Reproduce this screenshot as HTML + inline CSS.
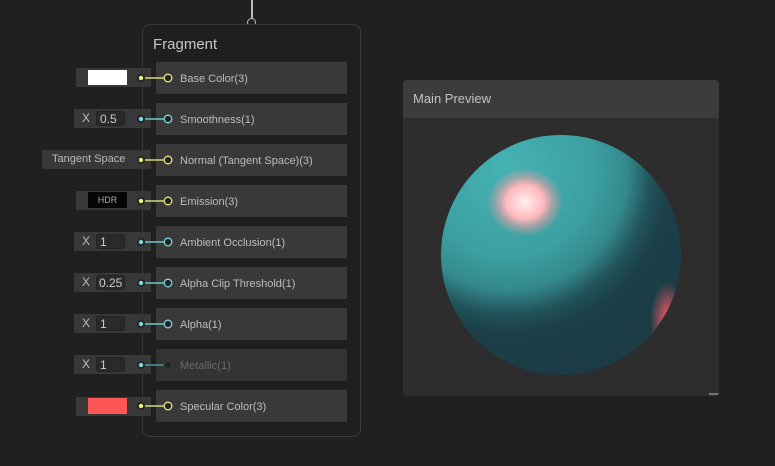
<!DOCTYPE html>
<html><head><style>
body{margin:0;width:775px;height:466px;background:#202020;position:relative;overflow:hidden;font-family:"Liberation Sans",sans-serif;}
.a{position:absolute}
.node{left:142px;top:24px;width:219px;height:413px;border:1px solid #3a3a3a;border-radius:8px;background:#1f1f1f;box-sizing:border-box}
.row{left:156px;width:191px;height:32px;background:#393939;color:#bdbdbd;font-size:11px;line-height:34px;padding-left:24px;box-sizing:border-box}
.fld{left:76px;width:75px;height:19px;background:#383838;color:#bbb;font-size:12px}
.in{position:absolute;left:22px;top:2px;width:29px;height:15px;background:#2a2a2a;border:1px solid #222;border-radius:3px;box-sizing:border-box;font-size:12px;line-height:14px;padding-left:3px;color:#ccc}
</style></head><body>
<div class="a" style="left:251px;top:0;width:2px;height:20px;background:#bbb"></div>
<div class="a" style="left:247px;top:18px;width:7px;height:7px;border:1px solid #bbb;border-radius:50%;background:#202020"></div>
<div class="a node"></div>
<div class="a" style="left:153px;top:36px;color:#c8c8c8;font-size:15px">Fragment</div>

<div class="a" style="left:403px;top:80px;width:316px;height:316px;background:#2d2d2d;border-radius:4px;overflow:hidden">
<div style="height:38px;background:#3c3c3c;color:#c4c4c4;font-size:13px;line-height:38px;padding-left:10px">Main Preview</div>
<svg class="a" style="left:0;top:0" width="316" height="316">
<defs>
<radialGradient id="d" cx="0.28" cy="0.15" r="0.9" fx="0.28" fy="0.15"><stop offset="0" stop-color="#45b3b4"/><stop offset="0.4" stop-color="#3c9fa1"/><stop offset="0.55" stop-color="#34898d"/><stop offset="0.66" stop-color="#22535a"/><stop offset="0.75" stop-color="#1c3f48"/><stop offset="1" stop-color="#1b3c45"/></radialGradient>
<radialGradient id="h"><stop offset="0" stop-color="#fff0f0"/><stop offset="0.5" stop-color="#ffb8bc"/><stop offset="0.75" stop-color="#f0a0a6" stop-opacity=".5"/><stop offset="1" stop-color="#ff9aa0" stop-opacity="0"/></radialGradient>
<radialGradient id="r"><stop offset="0" stop-color="#ff5a66"/><stop offset="1" stop-color="#ff5a66" stop-opacity="0"/></radialGradient>
<clipPath id="c"><circle cx="158" cy="175" r="120"/></clipPath>
</defs>
<circle cx="158" cy="175" r="120" fill="url(#d)"/>
<g clip-path="url(#c)">
<ellipse cx="122" cy="122" rx="38" ry="34" fill="url(#h)"/>
<ellipse cx="265" cy="240" rx="18" ry="38" fill="url(#r)"/>
</g>
<rect x="306" y="313" width="10" height="2" fill="#777"/>
</svg></div>

<div class="a row" style="top:62px">Base Color(3)</div>
<div class="a row" style="top:103px">Smoothness(1)</div>
<div class="a row" style="top:144px">Normal (Tangent Space)(3)</div>
<div class="a row" style="top:185px">Emission(3)</div>
<div class="a row" style="top:226px">Ambient Occlusion(1)</div>
<div class="a row" style="top:267px">Alpha Clip Threshold(1)</div>
<div class="a row" style="top:308px">Alpha(1)</div>
<div class="a row" style="top:349px;color:#6a6a6a;background:#333">Metallic(1)</div>
<div class="a row" style="top:390px">Specular Color(3)</div>

<div class="a fld" style="top:68px;left:76px;width:75px"><div class="a" style="left:12px;top:2px;width:39px;height:15px;background:#fff"></div></div>
<div class="a fld" style="top:109px;left:74px;width:77px"><span class="a" style="left:8px;top:2px">X</span><div class="in">0.5</div></div>
<div class="a fld" style="top:150px;left:42px;width:109px;font-size:11px;line-height:19px;padding-left:10px;box-sizing:border-box">Tangent Space</div>
<div class="a fld" style="top:191px;left:76px;width:75px"><div class="a" style="left:12px;top:1px;width:39px;height:16px;background:#050505;color:#aaa;font-size:9px;line-height:16px;text-align:center">HDR</div></div>
<div class="a fld" style="top:232px;left:74px;width:77px"><span class="a" style="left:8px;top:2px">X</span><div class="in">1</div></div>
<div class="a fld" style="top:273px;left:74px;width:77px"><span class="a" style="left:8px;top:2px">X</span><div class="in" style="padding-left:2px;font-size:12px">0.25</div></div>
<div class="a fld" style="top:314px;left:74px;width:77px"><span class="a" style="left:8px;top:2px">X</span><div class="in">1</div></div>
<div class="a fld" style="top:355px;left:74px;width:77px"><span class="a" style="left:8px;top:2px">X</span><div class="in">1</div></div>
<div class="a fld" style="top:397px;left:76px;width:75px"><div class="a" style="left:12px;top:1px;width:39px;height:16px;background:#fe5555"></div></div>

<svg class="a" style="left:130px;top:60px" width="50" height="370">
<g stroke-width="1.5">
<g stroke="#d8d870"><line x1="11" y1="18" x2="34" y2="18"/><line x1="11" y1="100" x2="34" y2="100"/><line x1="11" y1="141" x2="34" y2="141"/><line x1="11" y1="346" x2="34" y2="346"/></g>
<g stroke="#6ec8d0"><line x1="11" y1="59" x2="34" y2="59"/><line x1="11" y1="182" x2="34" y2="182"/><line x1="11" y1="223" x2="34" y2="223"/><line x1="11" y1="264" x2="34" y2="264"/><line x1="11" y1="305" x2="34" y2="305" stroke="#4a9aa0"/></g>
</g>
<g stroke-width="1.3" fill="#222">
<circle cx="38" cy="18" r="3.8" stroke="#e8e87a"/><circle cx="38" cy="100" r="3.8" stroke="#e8e87a"/><circle cx="38" cy="141" r="3.8" stroke="#e8e87a"/><circle cx="38" cy="346" r="3.8" stroke="#e8e87a"/>
<circle cx="38" cy="59" r="3.8" stroke="#7bd8e0"/><circle cx="38" cy="182" r="3.8" stroke="#7bd8e0"/><circle cx="38" cy="223" r="3.8" stroke="#7bd8e0"/><circle cx="38" cy="264" r="3.8" stroke="#7bd8e0"/><circle cx="38" cy="305" r="3.8" stroke="#2c4044"/>
</g>
<g>
<circle cx="11" cy="18" r="4" fill="#222"/><circle cx="11" cy="18" r="2.2" fill="#f0f07a"/>
<circle cx="11" cy="100" r="4" fill="#222"/><circle cx="11" cy="100" r="2.2" fill="#f0f07a"/>
<circle cx="11" cy="141" r="4" fill="#222"/><circle cx="11" cy="141" r="2.2" fill="#f0f07a"/>
<circle cx="11" cy="346" r="4" fill="#222"/><circle cx="11" cy="346" r="2.2" fill="#f0f07a"/>
<circle cx="11" cy="59" r="4" fill="#222"/><circle cx="11" cy="59" r="2.2" fill="#7bd8e0"/>
<circle cx="11" cy="182" r="4" fill="#222"/><circle cx="11" cy="182" r="2.2" fill="#7bd8e0"/>
<circle cx="11" cy="223" r="4" fill="#222"/><circle cx="11" cy="223" r="2.2" fill="#7bd8e0"/>
<circle cx="11" cy="264" r="4" fill="#222"/><circle cx="11" cy="264" r="2.2" fill="#7bd8e0"/>
<circle cx="11" cy="305" r="4" fill="#222"/><circle cx="11" cy="305" r="2.2" fill="#7bd8e0"/>
</g>
</svg>
</body></html>
